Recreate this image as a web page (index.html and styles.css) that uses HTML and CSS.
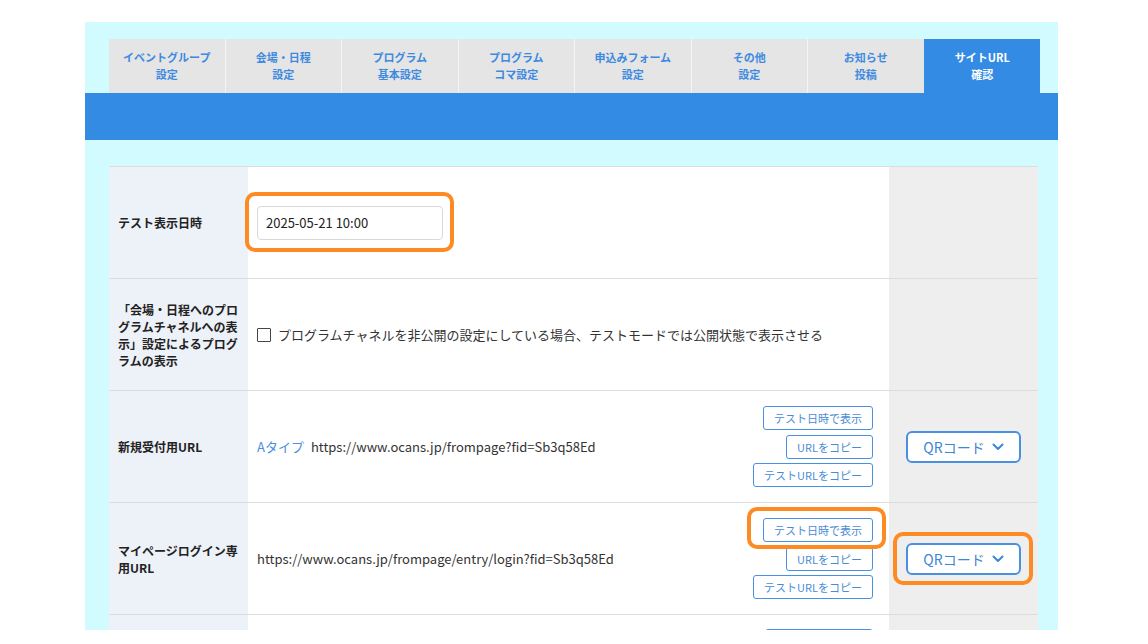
FILE: index.html
```html
<!DOCTYPE html>
<html lang="ja">
<head>
    <meta charset="UTF-8">
    <title>サイトURL確認</title>
    <link rel="stylesheet" href="styles.css">
</head>
<body>
    <div class="panel">
        <ul class="tabs">
            <li class="tab">イベントグループ<br>設定</li>
            <li class="tab">会場・日程<br>設定</li>
            <li class="tab">プログラム<br>基本設定</li>
            <li class="tab">プログラム<br>コマ設定</li>
            <li class="tab">申込みフォーム<br>設定</li>
            <li class="tab">その他<br>設定</li>
            <li class="tab">お知らせ<br>投稿</li>
            <li class="tab active">サイトURL<br>確認</li>
        </ul>
        <div class="bar"></div>

        <div class="table">
            <div class="row">
                <div class="label">テスト表示日時</div>
                <div class="content">
                    <span class="mark mark-input">
                        <input type="text" class="date-input" value="2025-05-21 10:00">
                    </span>
                </div>
                <div class="side"></div>
            </div>

            <div class="row">
                <div class="label">「会場・日程へのプログラムチャネルへの表示」設定によるプログラムの表示</div>
                <div class="content">
                    <label class="check">
                        <span class="box"></span>
                        プログラムチャネルを非公開の設定にしている場合、テストモードでは公開状態で表示させる
                    </label>
                </div>
                <div class="side"></div>
            </div>

            <div class="row">
                <div class="label">新規受付用URL</div>
                <div class="content split">
                    <div class="url"><span class="type">Aタイプ</span>https://www.ocans.jp/frompage?fid=Sb3q58Ed</div>
                    <div class="actions">
                        <button class="small-btn">テスト日時で表示</button>
                        <button class="small-btn">URLをコピー</button>
                        <button class="small-btn">テストURLをコピー</button>
                    </div>
                </div>
                <div class="side">
                    <button class="qr-btn">QRコード
                        <svg width="12" height="8" viewBox="0 0 12 8"><path d="M1.5 1.5 L6 6 L10.5 1.5" fill="none" stroke="#3d86d8" stroke-width="2" stroke-linecap="round" stroke-linejoin="round"/></svg>
                    </button>
                </div>
            </div>

            <div class="row">
                <div class="label">マイページログイン専用URL</div>
                <div class="content split">
                    <div class="url">https://www.ocans.jp/frompage/entry/login?fid=Sb3q58Ed</div>
                    <div class="actions">
                        <span class="mark mark-small"><button class="small-btn">テスト日時で表示</button></span>
                        <button class="small-btn">URLをコピー</button>
                        <button class="small-btn">テストURLをコピー</button>
                    </div>
                </div>
                <div class="side">
                    <span class="mark mark-qr">
                        <button class="qr-btn">QRコード
                            <svg width="12" height="8" viewBox="0 0 12 8"><path d="M1.5 1.5 L6 6 L10.5 1.5" fill="none" stroke="#3d86d8" stroke-width="2" stroke-linecap="round" stroke-linejoin="round"/></svg>
                        </button>
                    </span>
                </div>
            </div>

            <!-- next row, only its top edge shows -->
            <div class="row row-cut">
                <div class="label"></div>
                <div class="content top">
                    <span class="small-btn btn-stub"></span>
                </div>
                <div class="side"></div>
            </div>
        </div>
    </div>
</body>
</html>
```

FILE: styles.css
```css
body {
    margin: 0;
    padding: 22px 0 0 85px;
    background-color: #ffffff;
    font-family: 'Noto Sans CJK JP', 'Noto Sans', sans-serif;
    color: #333;
}
.panel {
    width: 973px;
    height: 608px;
    overflow: hidden;
    background-color: #d2fbff;
    padding-top: 17px;
    box-sizing: border-box;
}
.tabs {
    list-style: none;
    margin: 0 18px 0 24px;
    padding: 0;
    display: flex;
}
.tab {
    flex: 1;
    height: 54px;
    background-color: #e5e5e5;
    border-left: 1.5px solid #f4f4f4;
    color: #3d8ae0;
    font-size: 11px;
    font-weight: bold;
    line-height: 17px;
    text-align: center;
    display: flex;
    align-items: center;
    justify-content: center;
}
.tab:first-child {
    border-left: none;
}
.tab.active {
    background-color: #338be3;
    border-left-color: #338be3;
    color: #ffffff;
}
.bar {
    height: 47px;
    background-color: #338be3;
}
.table {
    margin: 26px 20px 0 24px;
    border-top: 1px solid #dddddd;
}
.row {
    display: grid;
    grid-template-columns: 139px 641px 1fr;
    min-height: 111px;
    border-bottom: 1px solid #dddddd;
}
.label {
    background-color: #edf1f8;
    padding: 0 9px;
    font-size: 12px;
    font-weight: bold;
    line-height: 17px;
    color: #222;
    display: flex;
    align-items: center;
}
.content {
    background-color: #ffffff;
    padding: 0 16px 0 9px;
    display: flex;
    align-items: center;
    font-size: 13px;
}
.content.split {
    justify-content: space-between;
}
.content.top {
    align-items: flex-start;
    justify-content: flex-end;
    padding-top: 14px;
}
.side {
    background-color: #eeeeee;
    display: flex;
    align-items: center;
    justify-content: center;
}
.date-input {
    width: 186px;
    height: 34px;
    box-sizing: border-box;
    border: 1px solid #d8d8d8;
    border-radius: 4px;
    padding: 0 8px;
    font-family: inherit;
    font-size: 13px;
    color: #222;
    display: block;
}
.check {
    display: flex;
    align-items: center;
    gap: 7px;
}
.check .box {
    width: 14px;
    height: 14px;
    box-sizing: border-box;
    border: 1.5px solid #444;
    border-radius: 1px;
}
.url .type {
    color: #4a90e2;
    margin-right: 7px;
}
.actions {
    display: flex;
    flex-direction: column;
    align-items: flex-end;
    gap: 4.5px;
}
.small-btn {
    height: 24px;
    box-sizing: border-box;
    border: 1.5px solid #4a90e2;
    border-radius: 3px;
    background-color: #ffffff;
    color: #4a8bd6;
    font-family: inherit;
    font-size: 11px;
    padding: 0 10px;
    display: block;
}
.btn-stub {
    width: 108px;
}
.qr-btn {
    width: 115px;
    height: 32px;
    box-sizing: border-box;
    border: 2px solid #4a90e2;
    border-radius: 6px;
    background-color: #ffffff;
    color: #3d86d8;
    font-family: inherit;
    font-size: 14px;
    display: flex;
    align-items: center;
    justify-content: center;
    gap: 7px;
}
/* orange annotation frames */
.mark {
    position: relative;
    display: inline-block;
}
.mark::after {
    content: "";
    position: absolute;
    border: 4px solid #fd8a22;
    border-radius: 10px;
    pointer-events: none;
}
.mark-input::after {
    top: -14px;
    bottom: -12px;
    left: -12px;
    right: -11px;
}
.mark-small::after {
    top: -11px;
    bottom: -7px;
    left: -16px;
    right: -13px;
}
.mark-qr::after {
    top: -11px;
    bottom: -10px;
    left: -13px;
    right: -12px;
}
```
